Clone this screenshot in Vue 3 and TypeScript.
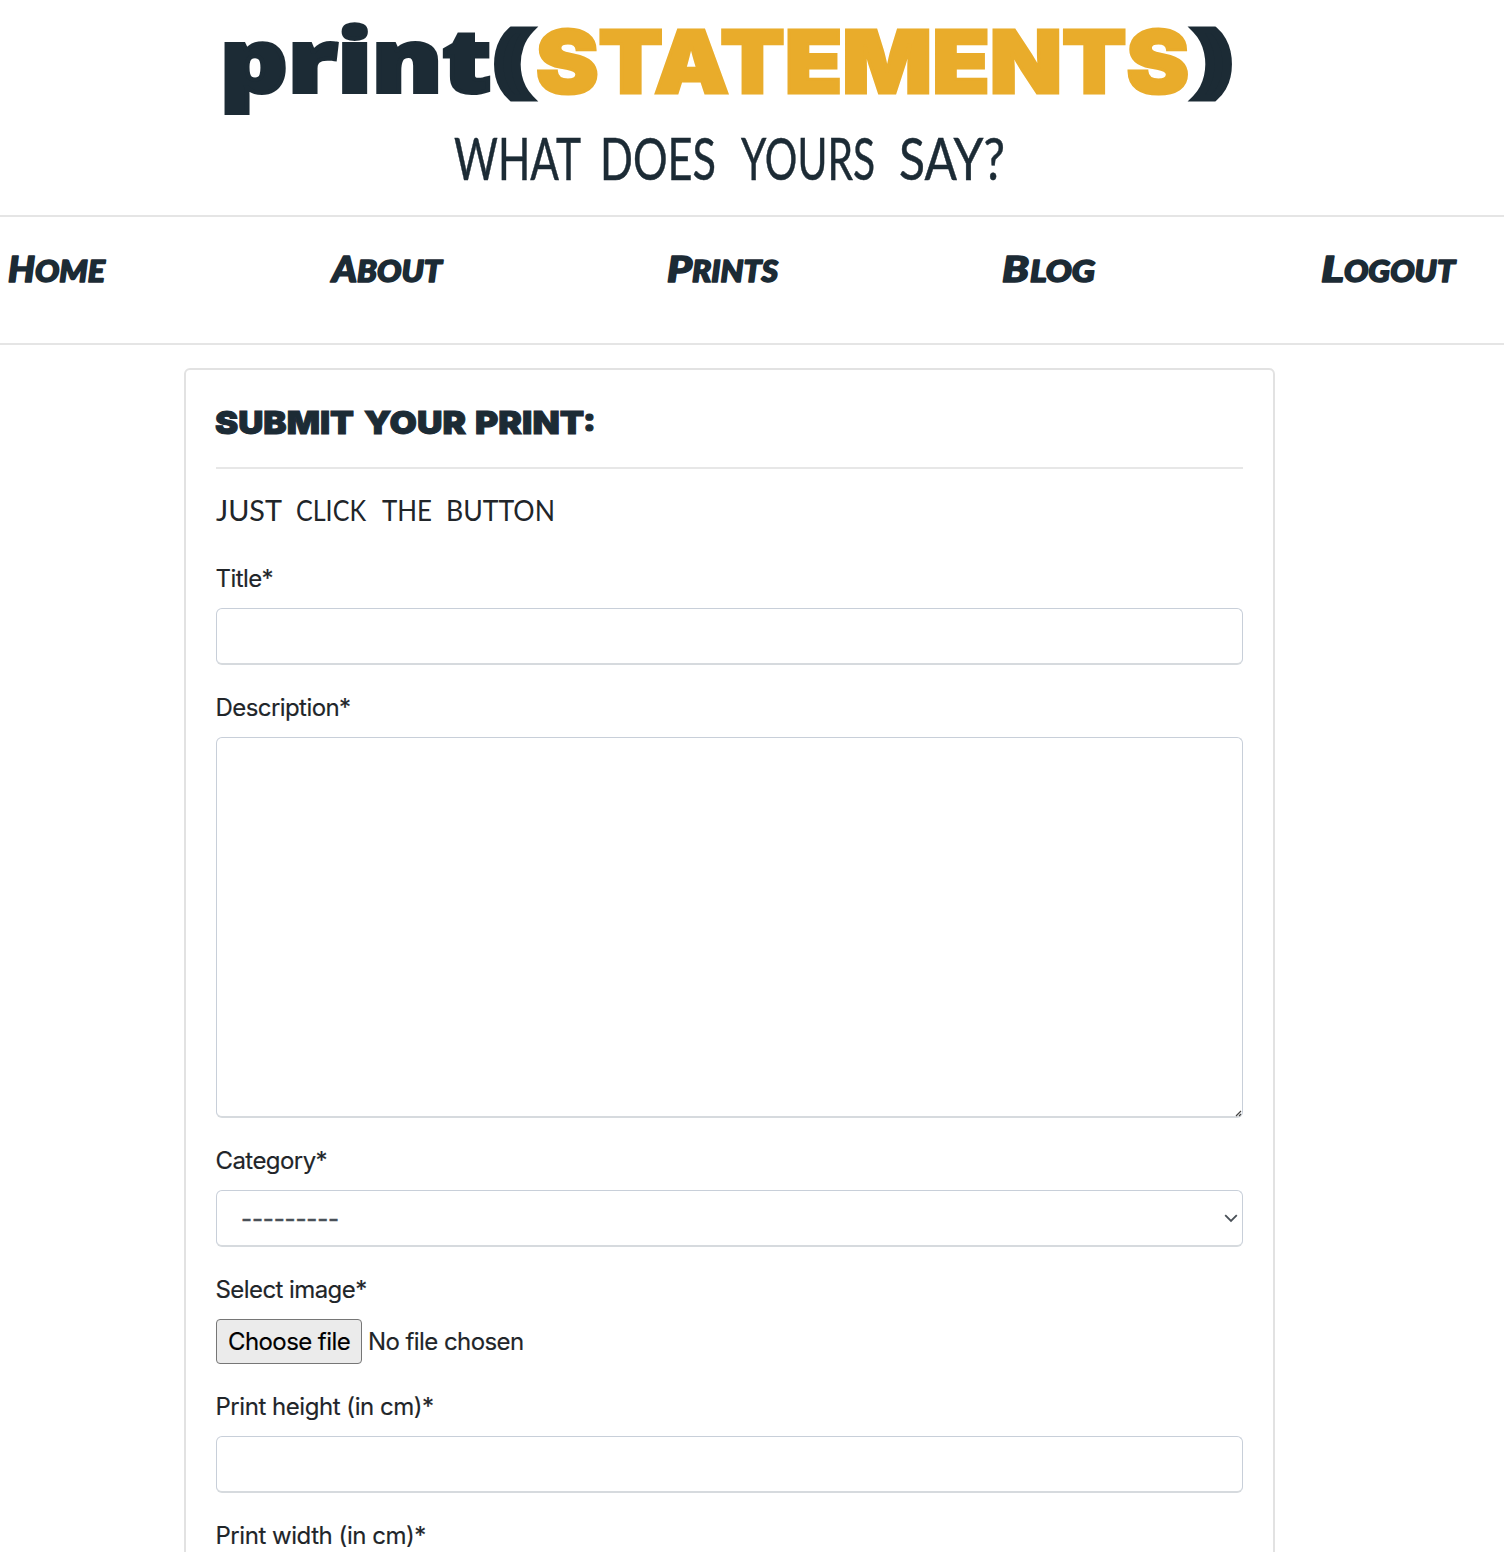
<script setup lang="ts">
interface Piece {
  t: string
  x: number
  w: number
  y?: number
  cls?: string
}
interface NavLink {
  name: string
  width: number
  head: Piece
  tail: Piece
}

const title: Piece[] = [
  { t: 'print', x: 220, w: 271, y: 92 },
  { t: '(', x: 495, w: 37, y: 85.5, cls: 'paren' },
  { t: 'STATEMENTS', x: 536, w: 653, y: 93, cls: 'gold' },
  { t: ')', x: 1194, w: 37, y: 85.5, cls: 'paren' },
]
const squeeze = 0.78
const tagline: Piece[] = [
  { t: 'WHAT', x: 454, w: 127 },
  { t: 'DOES', x: 600, w: 116 },
  { t: 'YOURS', x: 741, w: 134 },
  { t: 'SAY?', x: 899, w: 106 },
]
const heading: Piece[] = [
  { t: 'SUBMIT', x: -1, w: 139 },
  { t: 'YOUR', x: 148, w: 102 },
  { t: 'PRINT:', x: 259, w: 121 },
]
const hint: Piece[] = [
  { t: 'JUST', x: 0, w: 66 },
  { t: 'CLICK', x: 80, w: 70 },
  { t: 'THE', x: 166, w: 50 },
  { t: 'BUTTON', x: 230, w: 109 },
]
const links: NavLink[] = [
  { name: 'Home', width: 97, head: { t: 'H', x: 0, w: 27 }, tail: { t: 'ome', x: 27, w: 70 } },
  { name: 'About', width: 114, head: { t: 'A', x: 2, w: 25 }, tail: { t: 'bout', x: 27, w: 85 } },
  { name: 'Prints', width: 111, head: { t: 'P', x: -2, w: 25 }, tail: { t: 'rints', x: 23, w: 86 } },
  { name: 'Blog', width: 92, head: { t: 'B', x: -2, w: 27 }, tail: { t: 'log', x: 26, w: 65 } },
  { name: 'Logout', width: 136, head: { t: 'L', x: 0, w: 23 }, tail: { t: 'ogout', x: 23, w: 111 } },
]
</script>

<template>
  <div class="page">
    <header class="masthead">
      <svg width="1504" height="215">
        <text class="title">
          <tspan v-for="p in title" :key="p.x" :class="p.cls" :x="p.x" :y="p.y" :textLength="p.w" lengthAdjust="spacingAndGlyphs">{{ p.t }}</tspan>
        </text>
        <text v-for="p in tagline" :key="p.x" class="tagline" :transform="`translate(${p.x} 180) scale(${squeeze} 1)`" :textLength="p.w / squeeze" lengthAdjust="spacingAndGlyphs">{{ p.t }}</text>
      </svg>
    </header>
    <nav class="nav">
      <a v-for="l in links" :key="l.name">
        <svg :width="l.width" height="60">
          <text class="link" y="44.5">
            <tspan class="head" :x="l.head.x" :textLength="l.head.w" lengthAdjust="spacingAndGlyphs">{{ l.head.t }}</tspan><tspan class="tail" :x="l.tail.x" :textLength="l.tail.w" lengthAdjust="spacingAndGlyphs">{{ l.tail.t }}</tspan>
          </text>
        </svg>
      </a>
    </nav>
    <main class="card">
      <svg class="card-title" width="1027" height="97">
        <text class="heading" y="63.5">
          <tspan v-for="p in heading" :key="p.x" :x="p.x" :textLength="p.w" lengthAdjust="spacingAndGlyphs">{{ p.t }}</tspan>
        </text>
      </svg>
      <div class="rule"></div>
      <svg class="card-hint" width="1027" height="92">
        <text class="hint" y="51.5">
          <tspan v-for="p in hint" :key="p.x" :x="p.x" :textLength="p.w" lengthAdjust="spacingAndGlyphs">{{ p.t }}</tspan>
        </text>
      </svg>
      <form>
        <div class="group">
          <label>Title*</label>
          <input class="control" type="text" />
        </div>
        <div class="group">
          <label>Description*</label>
          <div class="area">
            <textarea class="control"></textarea>
            <svg class="grip" width="7" height="7" viewBox="0 0 7 7"><path d="M1 6L6 1M4 6L6 4" /></svg>
          </div>
        </div>
        <div class="group">
          <label>Category*</label>
          <div class="control select">
            <span>---------</span>
            <svg width="14" height="10" viewBox="0 0 14 10"><path d="M1.2 2.2L7 8L12.8 2.2" /></svg>
          </div>
        </div>
        <div class="group">
          <label>Select image*</label>
          <div class="file"><button type="button">Choose file</button><span class="none">No file chosen</span></div>
        </div>
        <div class="group">
          <label class="long">Print height (in cm)*</label>
          <input class="control" type="text" />
        </div>
        <div class="group">
          <label class="long">Print width (in cm)*</label>
          <input class="control" type="text" />
        </div>
      </form>
    </main>
  </div>
</template>

<style>
body {
  background: #fff;
}
</style>

<style scoped>
.page {
  width: 1504px;
  height: 1552px;
  overflow: hidden;
  font-family: Inter, 'Liberation Sans', sans-serif;
  font-size: 24px;
  letter-spacing: -0.57px;
  color: #212529;
}
svg {
  display: block;
  overflow: visible;
  letter-spacing: 0;
}
.masthead {
  height: 215px;
}
.title {
  font: 900 87px 'Noto Sans', sans-serif;
  fill: #1c2b35;
  stroke: #1c2b35;
  stroke-width: 4px;
}
.gold {
  font-family: Inter, sans-serif;
  fill: #e9ac2b;
  stroke: #e9ac2b;
  stroke-width: 3px;
}
.paren {
  font-size: 77px;
  stroke-width: 7px;
}
.tagline {
  font: 400 59px Lato, sans-serif;
  fill: #1c2b35;
  stroke: #1c2b35;
  stroke-width: 0.5px;
}
.nav {
  box-sizing: border-box;
  height: 130px;
  padding: 20px 47px 0 8px;
  border-top: 2px solid #e5e5e5;
  border-bottom: 2px solid #e5e5e5;
  display: flex;
  justify-content: space-between;
}
.link {
  font: italic 900 35.5px Lato, sans-serif;
  fill: #1c2b35;
  stroke: #1c2b35;
  stroke-width: 1.6px;
  stroke-linejoin: round;
}
.tail {
  font-size: 30px;
  text-transform: uppercase;
}
.card {
  box-sizing: border-box;
  width: 1091px;
  height: 1300px;
  margin: 23px 0 0 184px;
  padding: 0 30px;
  border: 2px solid #e2e2e2;
  border-radius: 6px;
}
.rule {
  height: 2px;
  background: #e7e7e7;
}
.heading {
  font: 900 32px Inter, sans-serif;
  fill: #1c2b35;
  stroke: #1c2b35;
  stroke-width: 1px;
}
.hint {
  font: 400 28px Lato, sans-serif;
  fill: #212529;
}
.group {
  display: flex;
  flex-direction: column;
  align-items: flex-start;
  margin-bottom: 25px;
}
label {
  height: 36px;
  margin: 0 0 11px -0.5px;
  line-height: 36px;
  white-space: nowrap;
  -webkit-text-stroke: 0.15px #212529;
}
.long {
  letter-spacing: -0.46px;
}
.control {
  box-sizing: border-box;
  width: 1027px;
  height: 57px;
  margin: 0;
  border: 1px solid #c8cfd9;
  border-bottom: 2px solid #d6dade;
  border-radius: 6px;
  background: #fff;
  outline: none;
  display: block;
}
.area {
  position: relative;
}
textarea.control {
  height: 381px;
  resize: none;
}
.grip {
  position: absolute;
  right: 1px;
  bottom: 1px;
}
.grip path {
  stroke: #444;
  stroke-width: 1.2;
  fill: none;
}
.select {
  display: flex;
  align-items: center;
  justify-content: space-between;
  padding: 0 4.5px 0 24px;
  letter-spacing: -0.15px;
  color: #495057;
}
.select span {
  -webkit-text-stroke: 0.4px #495057;
}
.select path {
  fill: none;
  stroke: #495057;
  stroke-width: 1.8;
}
.file {
  display: flex;
  align-items: center;
  height: 45px;
  -webkit-text-stroke: 0.15px;
}
.file button {
  box-sizing: border-box;
  width: 146px;
  height: 45px;
  padding: 0;
  border: 1.5px solid #767676;
  border-radius: 4px;
  background: #ebebeb;
  color: #000;
  font: 24px Inter, sans-serif;
  letter-spacing: -0.57px;
  white-space: nowrap;
}
.none {
  margin-left: 6px;
}
</style>
